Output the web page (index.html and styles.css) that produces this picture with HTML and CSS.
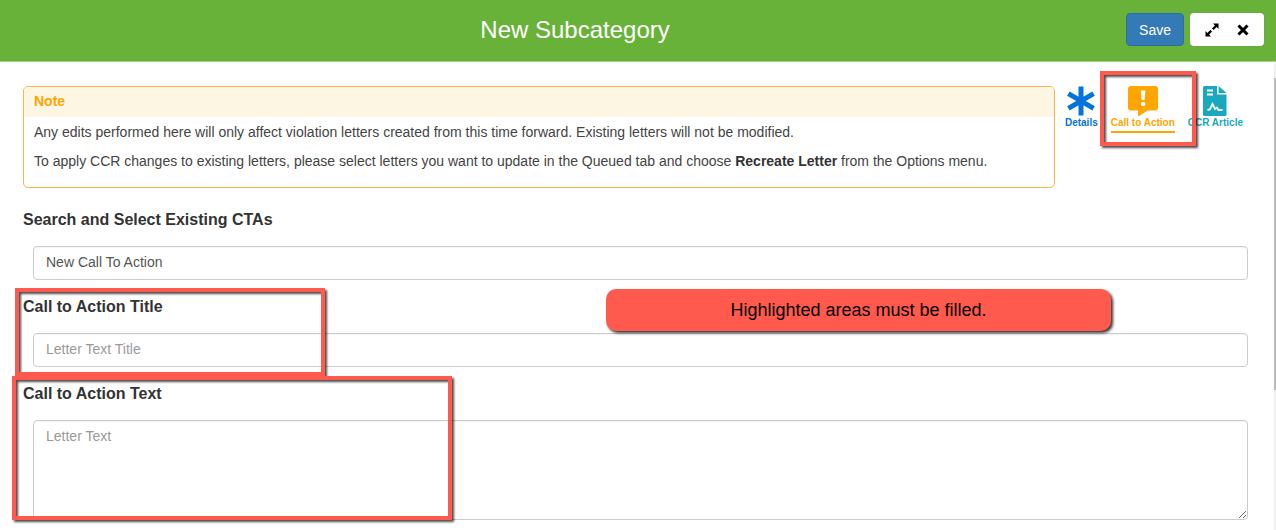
FILE: index.html
```html
<!DOCTYPE html>
<html lang="en">
<head>
    <meta charset="utf-8">
    <title>New Subcategory</title>
    <link rel="stylesheet" href="styles.css">
</head>
<body>

    <header class="modal-header">
        <h1 class="modal-title">New Subcategory</h1>
        <div class="header-buttons">
            <button type="button" class="btn btn-save">Save</button>
            <div class="window-buttons">
                <button type="button" class="btn btn-icon" aria-label="Expand">
                    <svg width="14" height="14" viewBox="0 0 14 14">
                        <path d="M8 0.5h5.5V6l-1.9-1.9-3 3-1.7-1.7 3-3z"/>
                        <path d="M6 13.5H0.5V8l1.9 1.9 3-3 1.7 1.7-3 3z"/>
                    </svg>
                </button>
                <button type="button" class="btn btn-icon" aria-label="Close">
                    <svg width="12" height="12" viewBox="0 0 12 12">
                        <path d="M1.5 1.5l9 9M10.5 1.5l-9 9" stroke="#000" stroke-width="3"/>
                    </svg>
                </button>
            </div>
        </div>
    </header>

    <div class="modal-body">
        <main class="content">
            <div class="top-row">
                <section class="note">
                    <h2 class="note-heading">Note</h2>
                    <div class="note-body">
                        <p>Any edits performed here will only affect violation letters created from this time forward. Existing letters will not be modified.</p>
                        <p>To apply CCR changes to existing letters, please select letters you want to update in the Queued tab and choose <strong>Recreate Letter</strong> from the Options menu.</p>
                    </div>
                </section>

                <nav class="tabs">
                    <a href="#details" class="tab tab-details">
                        <svg width="30" height="30" viewBox="0 0 30 30">
                            <path d="M15 0.5v29M2.4 7.7l25.2 14.6M27.6 7.7L2.4 22.3" stroke="currentColor" stroke-width="5"/>
                        </svg>
                        <span>Details</span>
                    </a>
                    <a href="#call-to-action" class="tab tab-cta">
                        <svg width="30" height="30" viewBox="0 0 30 30">
                            <path d="M3 0h24a3 3 0 0 1 3 3v18.5a3 3 0 0 1-3 3h-7.5l-8 5.2c-0.8 0.5-1.5 0.2-1.5-0.6v-4.6H3a3 3 0 0 1-3-3V3a3 3 0 0 1 3-3z" fill="currentColor"/>
                            <path d="M12.8 4.5h4.6l-0.8 9.5h-3z" fill="#fff"/>
                            <circle cx="15.1" cy="18" r="2.3" fill="#fff"/>
                        </svg>
                        <span>Call to Action</span>
                        <i class="highlight"></i>
                    </a>
                    <a href="#ccr-article" class="tab tab-ccr">
                        <svg width="24" height="30" viewBox="0 0 24 30">
                            <path d="M1.5 0H14v8.5h9.5v20a1.5 1.5 0 0 1-1.5 1.5H1.5A1.5 1.5 0 0 1 0 28.5v-27A1.5 1.5 0 0 1 1.5 0z" fill="currentColor"/>
                            <path d="M15.6 0l7.9 7h-7.9z" fill="currentColor"/>
                            <path d="M4 4.5h6M4 8.5h6M4.500 24l2.3-0.5L9.5 18l2.5 5 2-1.5 1.5 2.5h4" fill="none" stroke="#fff" stroke-width="1.8"/>
                        </svg>
                        <span>CCR Article</span>
                    </a>
                </nav>
            </div>

            <form class="cta-form">
                <div class="form-group">
                    <label for="cta-search">Search and Select Existing CTAs</label>
                    <input type="text" id="cta-search" class="form-control" value="New Call To Action">
                </div>
                <div class="form-group">
                    <label for="cta-title">Call to Action Title</label>
                    <input type="text" id="cta-title" class="form-control" placeholder="Letter Text Title">
                    <i class="highlight highlight-title"></i>
                    <div class="callout">Highlighted areas must be filled.</div>
                </div>
                <div class="form-group">
                    <label for="cta-text">Call to Action Text</label>
                    <textarea id="cta-text" class="form-control" placeholder="Letter Text"></textarea>
                    <i class="highlight highlight-text"></i>
                </div>
            </form>
        </main>
        <div class="scroll-track"><div class="scroll-thumb"></div></div>
    </div>

</body>
</html>
```
FILE: styles.css
```css
* {
    box-sizing: border-box;
}

body {
    display: flex;
    flex-direction: column;
    height: 100vh;
    margin: 0;
    overflow: hidden;
    background-color: white;
    color: #333;
    font-family: "Liberation Sans", Arial, sans-serif;
    font-size: 14px;
    line-height: 20px;
}

/* header */
.modal-header {
    display: flex;
    align-items: center;
    flex-shrink: 0;
    padding: 13px 12px 15px 24px;
    background-color: #69b23a;
    border-bottom: 1px solid #a5d187;
}

.modal-title {
    flex: 1;
    margin: 0;
    color: white;
    font-size: 24px;
    font-weight: normal;
    line-height: 30px;
    text-align: center;
}

.header-buttons {
    display: flex;
    gap: 6px;
}

.btn {
    height: 33px;
    padding: 0 12px;
    border: 0;
    background: none;
    font-family: inherit;
    font-size: 14px;
    cursor: pointer;
}

.btn-save {
    border: 1px solid #2e6da4;
    border-radius: 4px;
    background-color: #337ab7;
    color: white;
}

.window-buttons {
    display: flex;
    padding: 0 6px;
    border-radius: 4px;
    background-color: white;
    box-shadow: 0 0 1px #777;
}

.btn-icon {
    display: flex;
    align-items: center;
    padding: 0 9px;
}

/* body */
.modal-body {
    display: flex;
    flex: 1;
    min-height: 0;
}

.content {
    flex: 1;
    padding: 24px 26px 0 23px;
}

.scroll-track {
    width: 2px;
    padding-top: 16px;
    background-color: #f1f1f1;
}

.scroll-thumb {
    height: 69%;
    background-color: #bbb;
}

.top-row {
    display: flex;
    align-items: flex-start;
    gap: 10px;
}

.note {
    flex: 1;
    border: 1px solid #f9b44c;
    border-radius: 5px;
    overflow: hidden;
}

.note-heading {
    margin: 0;
    padding: 4px 10px 6px;
    background-color: #fdf6e3;
    color: orange;
    font-size: 14px;
}

.note-body {
    padding: 5px 10px 16px;
    color: #444;
}

.note-body p {
    margin: 0;
}

.note-body p + p {
    margin-top: 9px;
}

.note-body strong {
    color: #333;
}

/* tabs */
.tabs {
    display: flex;
    align-items: flex-start;
    gap: 13px;
    padding-right: 5px;
}

.tab {
    display: flex;
    flex-direction: column;
    align-items: center;
    position: relative;
    font-size: 10px;
    font-weight: bold;
    line-height: 14px;
    text-decoration: none;
}

.tab-details {color: #0573dd;}
.tab-cta {color: orange;}
.tab-ccr {color: #18a9bf;}

.tab-cta span {
    border-bottom: 2px solid orange;
    padding-bottom: 1px;
}

/* red marker boxes drawn over the page */
.highlight {
    position: absolute;
    z-index: 1;
    top: -15px;
    left: -11px;
    right: -21px;
    bottom: -13px;
    border: 4px solid #ff5a4d;
    filter: drop-shadow(2px 2px 1px rgba(0, 0, 0, 0.7));
    pointer-events: none;
}

.highlight-title {
    top: -8px;
    left: -8px;
    right: auto;
    bottom: -9px;
    width: 310px;
}

.highlight-text {
    top: -7px;
    left: -11px;
    right: auto;
    bottom: 0;
    width: 440px;
}

.callout {
    position: absolute;
    top: -7px;
    left: 583px;
    width: 505px;
    padding: 11px;
    border-radius: 10px;
    background-color: #ff5a4d;
    box-shadow: 2px 2px 3px rgba(0, 0, 0, 0.8);
    color: black;
    font-size: 18px;
    text-align: center;
}

/* form */
.cta-form {
    display: flex;
    flex-direction: column;
    gap: 16px;
    margin-top: 21px;
}

.form-group {
    display: flex;
    flex-direction: column;
    gap: 15px;
    position: relative;
}

.form-group label {
    font-size: 16px;
    font-weight: bold;
    line-height: 22px;
}

.form-control {
    height: 34px;
    margin-left: 10px;
    padding: 5px 12px 7px;
    border: 1px solid #ccc;
    border-radius: 4px;
    background-color: white;
    box-shadow: inset 0 1px 1px rgba(0, 0, 0, 0.04);
    color: #555;
    font-family: inherit;
    font-size: 14px;
    line-height: 20px;
}

.form-control::placeholder {
    color: #999;
}

textarea.form-control {
    height: 100px;
}
```
